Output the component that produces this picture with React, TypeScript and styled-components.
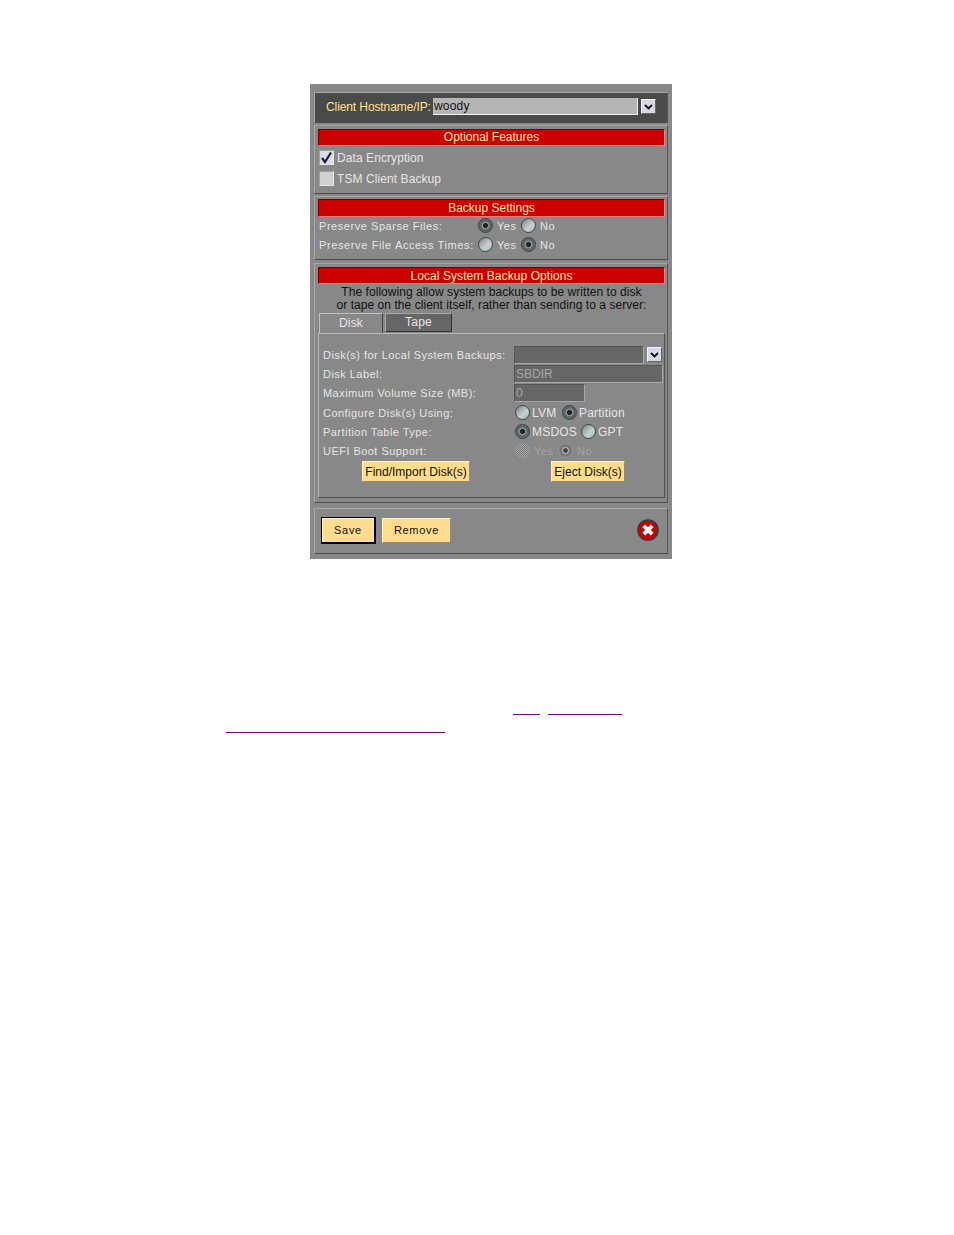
import React from "react";
import styled, { createGlobalStyle } from "styled-components";

const Global = createGlobalStyle`
  html, body { margin: 0; padding: 0; background: #fff; }
  body { font-family: "Liberation Sans", Arial, sans-serif; }
`;
const Page = styled.div`
  width: 954px;
  height: 1235px;
  padding-top: 84px;
  box-sizing: border-box;
  overflow: hidden;
`;
const Panel = styled.div`
  margin-left: 310px;
  width: 362px;
  height: 475px;
  box-sizing: border-box;
  background: #888888;
  padding: 8px 4px 0 4px;
  display: flex;
  flex-direction: column;
`;
const Section = styled.div<{ $h: number; $mb: number; $dark?: boolean; $pt?: number }>`
  height: ${(p) => p.$h}px;
  margin-bottom: ${(p) => p.$mb}px;
  box-sizing: border-box;
  border: 1px solid;
  border-color: #a8a8a8 #555 #4c4c4c #a8a8a8;
  background: ${(p) => (p.$dark ? "#4a4a4a" : "#888888")};
  padding: ${(p) => p.$pt ?? 3}px 2px 0 3px;
  display: flex;
  flex-direction: column;
`;
const HostBar = styled.div`
  display: flex;
  align-items: center;
  height: 100%;
  padding: 0 0 5px 8px;
  box-sizing: border-box;
`;
const HostLabel = styled.span`
  color: #ffe28e;
  font-size: 12px;
  letter-spacing: -0.1px;
  width: 107px;
  flex: none;
  white-space: nowrap;
`;
const HostInput = styled.div`
  width: 205px;
  height: 17px;
  box-sizing: border-box;
  background: #b5b5b5;
  border-right: 1px solid #eee;
  border-bottom: 1px solid #eee;
  font-size: 12px;
  line-height: 17px;
  letter-spacing: 0.2px;
  color: #111;
  padding-left: 1px;
`;
const DropBtn = styled.div<{ $ml: number }>`
  width: 15px;
  height: 15px;
  margin-left: ${(p) => p.$ml}px;
  box-sizing: border-box;
  background: #d8d8e6;
  border: 1px solid;
  border-color: #f4f4f4 #666 #666 #f4f4f4;
  display: flex;
  align-items: center;
  justify-content: center;
`;
const Chevron = () => (
  <svg width="9" height="6" viewBox="0 0 9 6">
    <path d="M1 1 L4.5 4.5 L8 1" fill="none" stroke="#111" strokeWidth="1.8" />
  </svg>
);
const Banner = styled.div<{ $h: number; $s?: number; $lh?: number }>`
  height: ${(p) => p.$h}px;
  flex: none;
  box-sizing: border-box;
  background: #cc0000;
  border: 1px solid;
  border-color: #551111 #ff7a7a #ff7a7a #551111;
  color: #ffe9a8;
  font-size: 12px;
  font-weight: 400;
  letter-spacing: ${(p) => p.$s ?? 0}px;
  text-align: center;
  line-height: ${(p) => p.$lh ?? p.$h - 2}px;
`;
const CheckRow = styled.div<{ $mt: number }>`
  display: flex;
  align-items: center;
  height: 15px;
  margin: ${(p) => p.$mt}px 0 0 1px;
  gap: 3px;
  font-size: 12px;
  letter-spacing: 0.08px;
  color: #e6e6e6;
`;
const CheckBox = styled.span<{ $on?: boolean }>`
  width: 15px;
  height: 15px;
  box-sizing: border-box;
  background: ${(p) => (p.$on ? "#dcdce4" : "#d0d0d0")};
  border: 1px solid;
  border-color: #a0a0a0 #e8e8e8 #e8e8e8 #a0a0a0;
  display: flex;
  align-items: center;
  justify-content: center;
`;
const RadioRow = styled.div<{ $mt: number }>`
  display: flex;
  align-items: center;
  height: 15px;
  margin: ${(p) => p.$mt}px 0 0 1px;
`;
const SmallLabel = styled.span<{ $w: number; $s?: number }>`
  width: ${(p) => p.$w}px;
  flex: none;
  font-size: 11px;
  letter-spacing: ${(p) => p.$s ?? 0.46}px;
  color: #e6e6e6;
  white-space: nowrap;
`;
const Radio = styled.span<{ $on?: boolean; $off?: boolean }>`
  width: 15px;
  height: 15px;
  flex: none;
  box-sizing: border-box;
  border-radius: 50%;
  border: 1px solid #3c4444;
  background: ${(p) =>
    p.$off
      ? p.$on
        ? "radial-gradient(circle, #444 0 2px, #aaa 2.5px 3.5px, #777 4px 100%)"
        : "repeating-conic-gradient(#aaa 0 25%, #777 0 50%) 0 0 / 2px 2px"
      : p.$on
        ? "radial-gradient(circle, #1e2626 0 2.2px, #8a9494 2.8px 3.4px, #5e6666 4.4px 100%)"
        : "linear-gradient(135deg, #7c8686 0%, #c8d0d0 60%, #a8b0b0 100%)"};
  ${(p) => p.$off && "border-color: #999;"}
`;
const RadioText = styled.span<{ $w: number; $off?: boolean; $big?: boolean }>`
  width: ${(p) => p.$w}px;
  flex: none;
  padding-left: ${(p) => (p.$big ? 2 : 4)}px;
  box-sizing: border-box;
  font-size: ${(p) => (p.$big ? 12 : 11)}px;
  letter-spacing: ${(p) => (p.$big ? 0.2 : 0.5)}px;
  color: ${(p) => (p.$off ? "#a4a4a4" : "#e6e6e6")};
  white-space: nowrap;
`;
const Intro = styled.div`
  margin-top: 2px;
  height: 27px;
  color: #111;
  text-align: center;
  font-size: 12px;
  line-height: 13px;
`;
const IntroLine = styled.div<{ $s: number }>`
  letter-spacing: ${(p) => p.$s}px;
  white-space: nowrap;
`;
const Tabs = styled.div`
  display: flex;
  align-items: flex-end;
  height: 20px;
  margin-left: 1px;
  gap: 2px;
`;
const Tab = styled.div<{ $active?: boolean; $w: number }>`
  width: ${(p) => p.$w}px;
  height: ${(p) => (p.$active ? 21 : 19)}px;
  box-sizing: border-box;
  margin-bottom: ${(p) => (p.$active ? -1 : 1)}px;
  background: ${(p) => (p.$active ? "#888" : "#666")};
  border: 1px solid;
  border-color: ${(p) =>
    p.$active ? "#c0c0c0 #444 #888 #c0c0c0" : "#a8a8a8 #333 #333 #a8a8a8"};
  color: #e6e6e6;
  font-size: 12px;
  letter-spacing: 0.2px;
  text-align: center;
  line-height: ${(p) => (p.$active ? 19 : 17)}px;
`;
const TabBody = styled.div`
  height: 165px;
  box-sizing: border-box;
  border: 1px solid;
  border-color: #b8b8b8 #4c4c4c #4c4c4c #b8b8b8;
  padding: 11px 0 0 4px;
  display: flex;
  flex-direction: column;
`;
const FormRow = styled.div<{ $h: number }>`
  display: flex;
  align-items: center;
  height: ${(p) => p.$h}px;
`;
const Field = styled.div<{ $w: number; $h: number }>`
  width: ${(p) => p.$w}px;
  height: ${(p) => p.$h}px;
  flex: none;
  box-sizing: border-box;
  background: #666;
  border: 1px solid;
  border-color: #555 #a8a8a8 #a8a8a8 #555;
  color: #a8a8a8;
  font-size: 12px;
  line-height: ${(p) => p.$h - 2}px;
  padding-left: 1px;
`;
const Actions = styled.div`
  display: flex;
  margin-top: 1px;
  height: 21px;
  padding-left: 39px;
`;
const Btn = styled.div<{ $w: number; $h: number; $ml?: number; $def?: boolean; $s?: number }>`
  width: ${(p) => p.$w}px;
  height: ${(p) => p.$h}px;
  margin-left: ${(p) => p.$ml ?? 0}px;
  flex: none;
  box-sizing: border-box;
  background: #ffdc8e;
  border: 1px solid;
  border-width: ${(p) => (p.$def ? "1px 2px 2px 1px" : "1px")};
  border-color: ${(p) => (p.$def ? "#000" : "#fff2cc #998a66 #998a66 #fff2cc")};
  ${(p) => p.$def && "box-shadow: inset 1px 1px 0 #fff2cc;"}
  color: #111;
  font-size: ${(p) => (p.$s ? 11 : 12)}px;
  letter-spacing: ${(p) => p.$s ?? 0}px;
  display: flex;
  align-items: center;
  justify-content: center;
  white-space: nowrap;
`;
const Footer = styled.div`
  display: flex;
  align-items: center;
  height: 100%;
  padding: 0 6px 5px 3px;
  box-sizing: border-box;
`;
const CloseWrap = styled.div`
  margin-left: auto;
  display: flex;
`;
const Notes = styled.div`
  height: 50px;
  margin-top: 155px;
  margin-left: 226px;
  display: flex;
  flex-direction: column;
`;
const LinkLine = styled.div<{ $mt: number; $ml: number }>`
  display: flex;
  gap: 8px;
  margin-top: ${(p) => p.$mt}px;
  margin-left: ${(p) => p.$ml}px;
`;
const LinkRule = styled.a<{ $w: number }>`
  display: block;
  width: ${(p) => p.$w}px;
  height: 1px;
  background: #800080;
`;

const Rb = ({ on, off, text, w, big }: { on?: boolean; off?: boolean; text: string; w: number; big?: boolean }) => (
  <>
    <Radio $on={on} $off={off} />
    <RadioText $w={w} $off={off} $big={big}>{text}</RadioText>
  </>
);

export default function App() {
  return (
    <Page>
      <Global />
      <Panel>
        <Section $h={31} $mb={2} $dark>
          <HostBar>
            <HostLabel>Client Hostname/IP:</HostLabel>
            <HostInput>woody</HostInput>
            <DropBtn $ml={3}><Chevron /></DropBtn>
          </HostBar>
        </Section>
        <Section $h={69} $mb={2}>
          <Banner $h={17}>Optional Features</Banner>
          <CheckRow $mt={4}>
            <CheckBox $on>
              <svg width="13" height="13" viewBox="0 0 13 13">
                <path d="M2 7 L5 11 L11 1.5" fill="none" stroke="#1c2438" strokeWidth="2.2" />
              </svg>
            </CheckBox>
            Data Encryption
          </CheckRow>
          <CheckRow $mt={6}>
            <CheckBox />
            TSM Client Backup
          </CheckRow>
        </Section>
        <Section $h={64} $mb={3} $pt={2}>
          <Banner $h={18}>Backup Settings</Banner>
          <RadioRow $mt={1}>
            <SmallLabel $w={159} $s={0.55}>Preserve Sparse Files:</SmallLabel>
            <Rb on text="Yes" w={28} />
            <Rb text="No" w={24} />
          </RadioRow>
          <RadioRow $mt={4}>
            <SmallLabel $w={159} $s={0.62}>Preserve File Access Times:</SmallLabel>
            <Rb text="Yes" w={28} />
            <Rb on text="No" w={24} />
          </RadioRow>
        </Section>
        <Section $h={240} $mb={5}>
          <Banner $h={17} $s={0.07} $lh={16}>Local System Backup Options</Banner>
          <Intro>
            <IntroLine $s={0.05}>The following allow system backups to be written to disk</IntroLine>
            <IntroLine $s={0.05}>or tape on the client itself, rather than sending to a server:</IntroLine>
          </Intro>
          <Tabs>
            <Tab $active $w={64}>Disk</Tab>
            <Tab $w={67}>Tape</Tab>
          </Tabs>
          <TabBody>
            <FormRow $h={19}>
              <SmallLabel $w={191}>Disk(s) for Local System Backups:</SmallLabel>
              <Field $w={130} $h={18} />
              <DropBtn $ml={3}><Chevron /></DropBtn>
            </FormRow>
            <FormRow $h={19}>
              <SmallLabel $w={191}>Disk Label:</SmallLabel>
              <Field $w={149} $h={18}>SBDIR</Field>
            </FormRow>
            <FormRow $h={20}>
              <SmallLabel $w={191}>Maximum Volume Size (MB):</SmallLabel>
              <Field $w={71} $h={18}>0</Field>
            </FormRow>
            <FormRow $h={19}>
              <SmallLabel $w={192}>Configure Disk(s) Using:</SmallLabel>
              <Rb text="LVM" w={32} big />
              <Rb on text="Partition" w={60} big />
            </FormRow>
            <FormRow $h={19}>
              <SmallLabel $w={192}>Partition Table Type:</SmallLabel>
              <Rb on text="MSDOS" w={51} big />
              <Rb text="GPT" w={40} big />
            </FormRow>
            <FormRow $h={19}>
              <SmallLabel $w={192}>UEFI Boot Support:</SmallLabel>
              <Rb off text="Yes" w={28} />
              <Rb off on text="No" w={30} />
            </FormRow>
            <Actions>
              <Btn $w={108} $h={21}>Find/Import Disk(s)</Btn>
              <Btn $w={74} $h={21} $ml={81}>Eject Disk(s)</Btn>
            </Actions>
          </TabBody>
        </Section>
        <Section $h={46} $mb={0}>
          <Footer>
            <Btn $w={55} $h={27} $def $s={0.7}>Save</Btn>
            <Btn $w={69} $h={25} $ml={6} $s={0.7}>Remove</Btn>
            <CloseWrap>
              <svg width="22" height="22" viewBox="0 0 22 22">
                <circle cx="11" cy="11" r="10" fill="#cc0000" stroke="#3a3a3a" strokeWidth="1.6" />
                <path d="M6.8 6.8 L15.2 15.2 M15.2 6.8 L6.8 15.2" stroke="#fff" strokeWidth="4" />
              </svg>
            </CloseWrap>
          </Footer>
        </Section>
      </Panel>
      <Notes>
        <LinkLine $mt={0} $ml={287}>
          <LinkRule $w={27} />
          <LinkRule $w={74} />
        </LinkLine>
        <LinkLine $mt={17} $ml={0}>
          <LinkRule $w={219} />
        </LinkLine>
      </Notes>
    </Page>
  );
}
